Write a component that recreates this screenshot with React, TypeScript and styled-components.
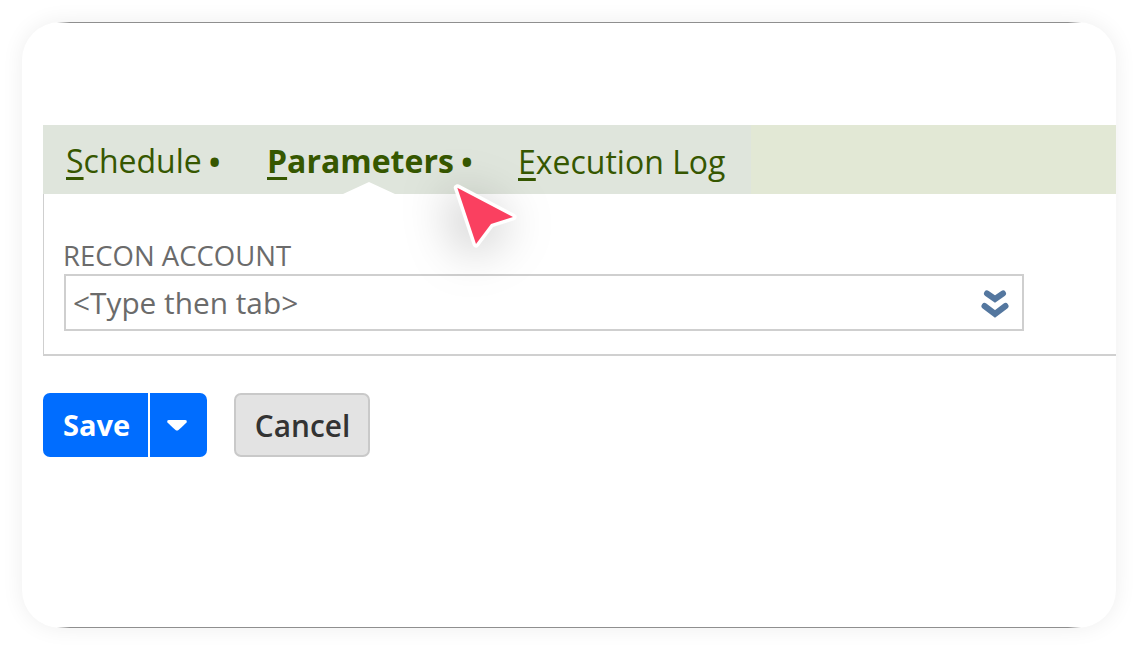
import React from "react";
import styled, { createGlobalStyle } from "styled-components";

const Global = createGlobalStyle`
  html, body { margin: 0; padding: 0; background: #fff; }
  body { font-family: "Open Sans", "Liberation Sans", sans-serif; }
`;

const Page = styled.div`
  width: 1138px;
  height: 650px;
  box-sizing: border-box;
  padding: 22px;
  overflow: hidden;
`;

const Card = styled.div`
  position: relative;
  width: 1094px;
  height: 606px;
  box-sizing: border-box;
  padding: 103px 0 0 21px;
  background: #fff;
  border-radius: 38px;
  box-shadow: 0 0 22px rgba(0, 0, 0, 0.07);
  overflow: hidden;
  &::before, &::after {
    content: "";
    position: absolute;
    left: 34px;
    right: 34px;
    height: 1px;
    background: linear-gradient(90deg, #fff 0, #8f8f8f 14px, #8f8f8f calc(100% - 14px), #fff 100%);
  }
  &::before { top: 0; }
  &::after { bottom: 0; }
`;

const TabBar = styled.div`
  display: flex;
  height: 69px;
  background: #e2e8d5;
`;

const TabGroup = styled.div`
  display: flex;
  align-items: center;
  width: 708px;
  box-sizing: border-box;
  padding: 0 0 0 23px;
  background: #dfe5dc;
`;

const Tab = styled.div<{ $active?: boolean; $width: number }>`
  position: relative;
  top: 2px;
  width: ${(p) => p.$width}px;
  flex: none;
  color: #365700;
  font-size: 32px;
  line-height: 40px;
  font-weight: ${(p) => (p.$active ? 700 : 400)};
  white-space: nowrap;
  u { text-underline-offset: 4px; text-decoration-thickness: 2.5px; }
`;

const Bullet = styled.span`
  margin-left: -1px;
  font-weight: 700;
  font-size: 30px;
`;

const Notch = styled.span`
  position: absolute;
  left: 76px;
  top: 41px;
  width: 0;
  height: 0;
  border-left: 26px solid transparent;
  border-right: 26px solid transparent;
  border-bottom: 12px solid #fff;
`;

const Panel = styled.div`
  height: 162px;
  box-sizing: border-box;
  padding: 44px 0 0 19px;
  border-left: 1px solid #cfcfcf;
  border-bottom: 2px solid #d0d0d0;
`;

const Label = styled.div`
  color: #6b6b6b;
  font-size: 27.5px;
  line-height: 36px;
  height: 36px;
`;

const Field = styled.div`
  display: flex;
  align-items: center;
  justify-content: space-between;
  width: 960px;
  height: 57px;
  margin-left: 1px;
  box-sizing: border-box;
  padding: 0 12px 0 7px;
  border: 2px solid #cfcfcf;
  color: #6b6b6b;
  font-size: 29.8px;
`;

const Actions = styled.div`
  display: flex;
  gap: 27px;
  margin-top: 37px;
`;

const SaveButton = styled.div`
  display: flex;
  width: 164px;
  height: 64px;
  border-radius: 7px;
  background: #006dff;
  color: #fff;
  font-size: 29px;
  font-weight: 700;
`;

const SaveLabel = styled.div`
  width: 107px;
  box-sizing: border-box;
  padding: 0 0 2px 2px;
  display: flex;
  align-items: center;
  justify-content: center;
  border-right: 2px solid #fff;
`;

const Caret = styled.div`
  flex: 1;
  padding-right: 3px;
  display: flex;
  align-items: center;
  justify-content: center;
`;

const CancelButton = styled.div`
  display: flex;
  align-items: center;
  justify-content: center;
  width: 136px;
  height: 64px;
  box-sizing: border-box;
  padding-left: 1px;
  border: 2px solid #c9c9c9;
  border-radius: 7px;
  background: #e3e3e3;
  color: #333;
  font-size: 29.8px;
  font-weight: 600;
`;

const Pointer = styled.svg`
  position: absolute;
  left: 425px;
  top: 150px;
  overflow: visible;
  filter: drop-shadow(-6px 8px 24px rgba(0, 0, 0, 0.28));
`;

export default function App() {
  return (
    <Page>
      <Global />
      <Card>
        <TabBar>
          <TabGroup>
            <Tab $width={201}><u>S</u>chedule <Bullet>•</Bullet></Tab>
            <Tab $active $width={251}>
              <u>P</u>arameters <Bullet>•</Bullet>
              <Notch />
            </Tab>
            <Tab $width={232}><u>E</u>xecution Log</Tab>
          </TabGroup>
        </TabBar>
        <Panel>
          <Label>RECON ACCOUNT</Label>
          <Field>
            <span>&lt;Type then tab&gt;</span>
            <svg width="30" height="30" viewBox="0 0 30 30" fill="none" stroke="#54779f" strokeWidth="6" strokeLinecap="round" strokeLinejoin="miter">
              <path d="M7 5.5 L15 11 L23 5.5" />
              <path d="M4.5 18 L15 26 L25.5 18" />
            </svg>
          </Field>
        </Panel>
        <Actions>
          <SaveButton>
            <SaveLabel>Save</SaveLabel>
            <Caret>
              <svg width="20" height="11" viewBox="0 0 20 11" fill="#fff">
                <path d="M2 0 H18 Q20.5 0 19.5 2.5 Q15 7 11.5 10 Q10 11 8.5 10 Q5 7 .5 2.5 Q-.5 0 2 0 Z" />
              </svg>
            </Caret>
          </SaveButton>
          <CancelButton>Cancel</CancelButton>
        </Actions>
        <Pointer width="70" height="70" viewBox="0 0 70 70">
          <path
            d="M10.3 15.7 L66 45 L44 52 L29 72 Z"
            fill="#fa4060"
            stroke="#fff"
            strokeWidth="7"
            strokeLinejoin="round"
            paintOrder="stroke fill"
          />
        </Pointer>
      </Card>
    </Page>
  );
}
